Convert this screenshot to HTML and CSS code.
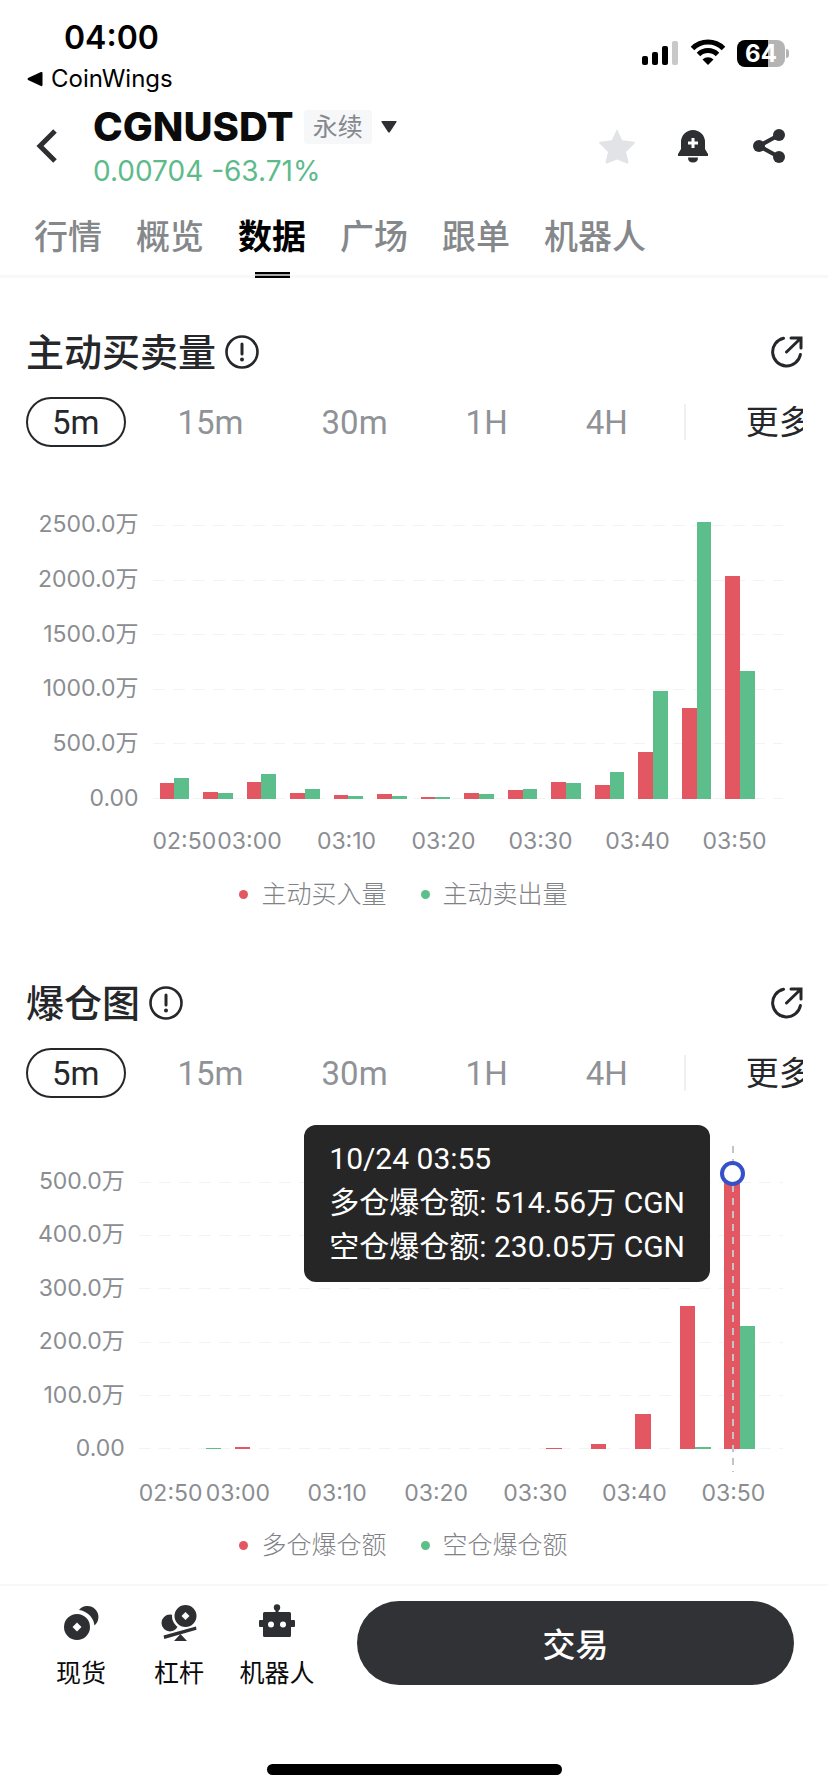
FILE: index.html
```html
<!DOCTYPE html>
<html lang="zh-CN">
<head>
  <meta charset="UTF-8">
  <meta name="viewport" content="width=device-width, initial-scale=1.0">
  <title>CGNUSDT 永续 - 数据</title>
  <link rel="stylesheet" href="styles.css">
</head>
<body>
  <div class="status-bar">
    <div class="status-left">
      <div class="time">04:00</div>
      <a class="back-app" href="#">
        <svg width="16" height="16" viewBox="0 0 16 16"><path d="M1 7 14 1q1.500-.5 1.500 1v12q0 1.500-1.500 1L1 9Q0 8 1 7z"/></svg>
        CoinWings
      </a>
    </div>
    <div class="status-right">
      <svg width="38" height="28" viewBox="0 0 38 28">
        <rect x="1" y="17" width="6" height="9" rx="2"/>
        <rect x="11" y="13" width="6" height="13" rx="2"/>
        <rect x="21" y="7" width="6" height="19" rx="2"/>
        <rect x="31" y="2" width="6" height="24" rx="2" fill="#c8c8c8"/>
      </svg>
      <svg width="36" height="28" viewBox="0 0 36 28">
        <path d="M2.500 9.500a22 22 0 0 1 31 0M8.500 15.500a13.500 13.500 0 0 1 19 0" fill="none" stroke="#000" stroke-width="5"/>
        <path d="M18 26l-5.500-5.500a7.800 7.800 0 0 1 11 0z"/>
      </svg>
      <div class="battery"><span>64</span></div>
    </div>
  </div>

  <header class="header">
    <button class="icon-btn" aria-label="返回">
      <svg width="22" height="34" viewBox="0 0 22 34"><path d="M19 2 4 17l15 15" fill="none" stroke="#2d2f32" stroke-width="5"/></svg>
    </button>
    <div class="symbol">
      <div class="symbol-row">
        <h1>CGNUSDT</h1>
        <span class="badge">永续</span>
        <button class="icon-btn" aria-label="切换交易对">
          <svg width="16" height="12" viewBox="0 0 16 12"><path d="M1 0h14q1 0 .5 1L9 11q-1 1-2 0L.5 1Q0 0 1 0z" fill="#2d2f32"/></svg>
        </button>
      </div>
      <div class="price">0.00704 -63.71%</div>
    </div>
    <div class="actions">
      <button class="icon-btn" aria-label="收藏">
        <svg width="36" height="36" viewBox="0 0 36 36"><path d="M18 1l5.200 11.200 11.800 1.600q1.500.7.300 2L27 24l2.500 10q0 2-2 1.200L18 31.500l-9.500 3.700q-2 .8-2-1.200L9 24 .7 15.800q-1.200-1.300.3-2l11.800-1.600z" fill="#e1e3e6"/></svg>
      </button>
      <button class="icon-btn" aria-label="提醒">
        <svg width="36" height="36" viewBox="0 0 36 36" fill="#2d2f32">
          <path d="M6 14a12 12 0 0 1 24 0v7l3 5v2H3v-2l3-5zM13 29.500h10q0 5-5 5t-5-5z"/>
          <path d="M18 10v10M13 15h10" stroke="#fff" stroke-width="3"/>
        </svg>
      </button>
      <button class="icon-btn" aria-label="分享">
        <svg width="36" height="36" viewBox="0 0 36 36" fill="#2d2f32">
          <path d="M28 7 8 18l20 11" fill="none" stroke="#2d2f32" stroke-width="4"/>
          <circle cx="28" cy="7" r="6"/><circle cx="8" cy="18" r="6"/><circle cx="28" cy="29" r="6"/>
        </svg>
      </button>
    </div>
  </header>

  <nav class="tabs">
    <a href="#">行情</a>
    <a href="#">概览</a>
    <a href="#" class="active">数据</a>
    <a href="#">广场</a>
    <a href="#">跟单</a>
    <a href="#">机器人</a>
  </nav>

  <main>
    <section class="card">
      <div class="card-head">
        <h2>主动买卖量</h2>
        <button class="icon-btn" aria-label="说明">
          <svg width="34" height="34" viewBox="0 0 34 34"><circle cx="17" cy="17" r="15.500" fill="none" stroke="#25272a" stroke-width="2.600"/><path d="M17 9v10" stroke="#25272a" stroke-width="3" stroke-linecap="round"/><circle cx="17" cy="24.500" r="2" fill="#25272a"/></svg>
        </button>
        <button class="icon-btn open" aria-label="展开">
          <svg width="32" height="32" viewBox="0 0 32 32" fill="none" stroke="#25272a" stroke-width="3" stroke-linecap="round"><path d="M12.500 2.300A14 14 0 1 0 29.400 18.500M15.500 16 29.500 2.500M20 2h10v10"/></svg>
        </button>
      </div>
      <div class="periods">
        <button class="active">5m</button>
        <button>15m</button>
        <button>30m</button>
        <button>1H</button>
        <button>4H</button>
        <span class="divider"></span>
        <button class="more">更多</button>
      </div>

      <div class="chart chart-volume">
        <div class="y-axis"><span>2500.0万</span><span>2000.0万</span><span>1500.0万</span><span>1000.0万</span><span>500.0万</span><span>0.00</span></div>
        <div class="plot">
          <div class="grid-lines"><i></i><i></i><i></i><i></i><i></i><i></i></div>
          <div class="bars">
            <div><b style="--v:143"></b><b style="--v:195"></b></div>
            <div><b style="--v:64"></b><b style="--v:58"></b></div>
            <div><b style="--v:155"></b><b style="--v:231"></b></div>
            <div><b style="--v:58"></b><b style="--v:91"></b></div>
            <div><b style="--v:33"></b><b style="--v:27"></b></div>
            <div><b style="--v:49"></b><b style="--v:24"></b></div>
            <div><b style="--v:21"></b><b style="--v:21"></b></div>
            <div><b style="--v:55"></b><b style="--v:49"></b></div>
            <div><b style="--v:85"></b><b style="--v:91"></b></div>
            <div><b style="--v:152"></b><b style="--v:143"></b></div>
            <div><b style="--v:125"></b><b style="--v:243"></b></div>
            <div><b style="--v:432"></b><b style="--v:988"></b></div>
            <div><b style="--v:830"></b><b style="--v:2524"></b></div>
            <div><b style="--v:2031"></b><b style="--v:1165"></b></div>
          </div>
        </div>
        <div class="x-axis"><span>02:50</span><span>03:00</span><span>03:10</span><span>03:20</span><span>03:30</span><span>03:40</span><span>03:50</span></div>
      </div>
      <div class="legend"><span class="buy">主动买入量</span><span class="sell">主动卖出量</span></div>
    </section>

    <section class="card">
      <div class="card-head">
        <h2>爆仓图</h2>
        <button class="icon-btn" aria-label="说明">
          <svg width="34" height="34" viewBox="0 0 34 34"><circle cx="17" cy="17" r="15.500" fill="none" stroke="#25272a" stroke-width="2.600"/><path d="M17 9v10" stroke="#25272a" stroke-width="3" stroke-linecap="round"/><circle cx="17" cy="24.500" r="2" fill="#25272a"/></svg>
        </button>
        <button class="icon-btn open" aria-label="展开">
          <svg width="32" height="32" viewBox="0 0 32 32" fill="none" stroke="#25272a" stroke-width="3" stroke-linecap="round"><path d="M12.500 2.300A14 14 0 1 0 29.400 18.500M15.500 16 29.500 2.500M20 2h10v10"/></svg>
        </button>
      </div>
      <div class="periods">
        <button class="active">5m</button>
        <button>15m</button>
        <button>30m</button>
        <button>1H</button>
        <button>4H</button>
        <span class="divider"></span>
        <button class="more">更多</button>
      </div>

      <div class="chart chart-liquidation">
        <div class="y-axis"><span>500.0万</span><span>400.0万</span><span>300.0万</span><span>200.0万</span><span>100.0万</span><span>0.00</span></div>
        <div class="plot">
          <div class="grid-lines"><i></i><i></i><i></i><i></i><i></i><i></i></div>
          <div class="bars">
            <div><b style="--v:0"></b><b style="--v:0"></b></div>
            <div><b style="--v:0"></b><b style="--v:1"></b></div>
            <div><b style="--v:4"></b><b style="--v:0"></b></div>
            <div><b style="--v:0"></b><b style="--v:0"></b></div>
            <div><b style="--v:0"></b><b style="--v:0"></b></div>
            <div><b style="--v:0"></b><b style="--v:0"></b></div>
            <div><b style="--v:0"></b><b style="--v:0"></b></div>
            <div><b style="--v:0"></b><b style="--v:0"></b></div>
            <div><b style="--v:0"></b><b style="--v:0"></b></div>
            <div><b style="--v:1"></b><b style="--v:0"></b></div>
            <div><b style="--v:9"></b><b style="--v:0"></b></div>
            <div><b style="--v:65"></b><b style="--v:0"></b></div>
            <div><b style="--v:267"></b><b style="--v:4"></b></div>
            <div><b class="selected" style="--v:514.56"></b><b style="--v:230.05"></b></div>
          </div>
          <div class="tooltip">
            <div>10/24 03:55</div>
            <div>多仓爆仓额: 514.56万 CGN</div>
            <div>空仓爆仓额: 230.05万 CGN</div>
          </div>
        </div>
        <div class="x-axis"><span>02:50</span><span>03:00</span><span>03:10</span><span>03:20</span><span>03:30</span><span>03:40</span><span>03:50</span></div>
      </div>
      <div class="legend"><span class="buy">多仓爆仓额</span><span class="sell">空仓爆仓额</span></div>
    </section>
  </main>

  <footer class="bottom-bar">
    <div class="bottom-row">
      <a class="entry" href="#">
        <svg width="36" height="38" viewBox="0 0 36 38" fill="#2d2f32">
          <path d="M16 6a11 11 0 1 1 15.500 15.500A18 18 0 0 0 16 6z"/>
          <circle cx="14" cy="23" r="15" fill="#fff"/>
          <path fill-rule="evenodd" d="M14 10a13 13 0 1 0 0 26 13 13 0 0 0 0-26zm0 8.500 4.500 4.500-4.500 4.500L9.500 23z"/>
        </svg>
        <span>现货</span>
      </a>
      <a class="entry" href="#">
        <svg width="36" height="38" viewBox="0 0 36 38" fill="#2d2f32">
          <circle cx="9" cy="19" r="8.500"/>
          <circle cx="24.500" cy="12" r="13.500" fill="#fff"/>
          <path fill-rule="evenodd" d="M24.500 1a11 11 0 1 0 0 22 11 11 0 0 0 0-22zm0 7 4 4-4 4-4-4z"/>
          <path d="M2.500 31.500 35 22.500l.5 3.200L3.300 35zM19.500 30l6.500 7H13z"/>
        </svg>
        <span>杠杆</span>
      </a>
      <a class="entry" href="#">
        <svg width="36" height="38" viewBox="0 0 36 38" fill="#2d2f32">
          <path d="M18 3v6" stroke="#2d2f32" stroke-width="3"/><circle cx="18" cy="3.500" r="3.200"/>
          <path fill-rule="evenodd" d="M5.500 8h25q1.500 0 1.500 1.500V16h3q1 0 1 1v5q0 1-1 1h-3v8.500q0 1.500-1.500 1.500h-25Q4 33 4 31.500V23H1q-1 0-1-1v-5q0-1 1-1h3V9.500Q4 8 5.500 8zM12 17.500a3 3 0 1 0 0 6 3 3 0 0 0 0-6zm12 0a3 3 0 1 0 0 6 3 3 0 0 0 0-6z"/>
        </svg>
        <span>机器人</span>
      </a>
      <button class="trade-btn">交易</button>
    </div>
    <div class="home-indicator"></div>
  </footer>
</body>
</html>
```
FILE: styles.css
```css
*,
*::before,
*::after {
  box-sizing: border-box;
}

body {
  margin: 0;
  min-height: 100vh;
  display: flex;
  flex-direction: column;
  background: #fff;
  color: #25272a;
  font-family: Inter, "Noto Sans CJK SC", sans-serif;
}

button {
  border: none;
  background: none;
  padding: 0;
  margin: 0;
  font: inherit;
  color: inherit;
  cursor: pointer;
}

a {
  color: inherit;
  text-decoration: none;
}

svg {
  display: block;
}

.icon-btn {
  flex: none;
}

/* status bar */
.status-bar {
  display: flex;
  justify-content: space-between;
  padding: 18px 39px 0 27px;
  color: #000;
}

.time {
  padding-left: 37px;
  font-size: 32px;
  line-height: 40px;
  font-weight: 600;
}

.back-app {
  display: flex;
  align-items: center;
  gap: 8px;
  margin-top: 7px;
  font-size: 24px;
  line-height: 28px;
}

.status-right {
  display: flex;
  align-items: center;
  gap: 11px;
  height: 28px;
  margin-top: 21px;
}

.battery {
  position: relative;
  width: 48px;
  height: 27px;
  margin-right: 4px;
  border-radius: 8px;
  background: linear-gradient(90deg, #000 64%, #b4b4b4 64%);
  color: #fff;
  font-size: 24px;
  line-height: 27px;
  font-weight: 700;
  text-align: center;
}

.battery::after {
  content: "";
  position: absolute;
  right: -4px;
  top: 9px;
  width: 3px;
  height: 9px;
  border-radius: 0 4px 4px 0;
  background: #b4b4b4;
}

/* header */
.header {
  display: flex;
  align-items: center;
  padding: 10px 41px 0 36px;
}

.symbol {
  flex: 1;
  margin-left: 35px;
}

.symbol-row {
  display: flex;
  align-items: center;
  height: 48px;
}

h1 {
  margin: 0 10px 0 0;
  font-size: 40px;
  line-height: 48px;
  font-weight: 800;
  color: #0b0b0c;
}

.badge {
  padding: 0 9px;
  margin-right: 9px;
  background: #f6f7f9;
  border-radius: 3px;
  color: #85888c;
  font-size: 25px;
  line-height: 34px;
}

.price {
  margin-top: 2px;
  color: #5dbb8b;
  font-size: 28px;
  line-height: 36px;
}

.actions {
  display: flex;
  gap: 40px;
}

/* tabs */
.tabs {
  display: flex;
  gap: 34px;
  padding: 28px 34px 0;
  border-bottom: 3px solid #f8f8f9;
  color: #85888b;
  font-size: 34px;
  line-height: 40px;
  font-weight: 500;
}

.tabs a {
  position: relative;
  padding-bottom: 18px;
  white-space: nowrap;
}

.tabs .active {
  color: #000;
  font-weight: 700;
}

.tabs .active::after {
  content: "";
  position: absolute;
  left: 50%;
  bottom: -3px;
  width: 35px;
  height: 6px;
  margin-left: -17px;
  border: solid #000;
  border-width: 2px 0;
  background: #aaa;
}

main {
  flex: 1;
}

/* chart cards */
.card {
  padding: 51px 25px 0 26px;
}

.card + .card {
  padding: 71px 25px 24px 26px;
}

.card-head {
  display: flex;
  align-items: center;
  gap: 9px;
}

h2 {
  margin: 0;
  font-size: 38px;
  line-height: 46px;
  font-weight: 500;
}

.open {
  margin-left: auto;
}

.periods {
  display: flex;
  align-items: center;
  gap: 26px;
  margin-top: 22px;
  overflow: hidden;
  color: #8f9296;
  font-family: Roboto, "Noto Sans CJK SC", sans-serif;
  font-size: 33px;
}

.periods button {
  flex: none;
  height: 50px;
  padding: 0 24px;
  border: 2px solid transparent;
  border-radius: 25px;
  line-height: 48px;
}

.periods .active {
  border-color: #25272a;
  color: #25272a;
}

.periods .more {
  color: #25272a;
}

.divider {
  flex: none;
  width: 2px;
  height: 36px;
  margin: 0 8px 0 4px;
  background: #f0f0f1;
}

.chart {
  display: grid;
  grid-template-columns: auto 1fr;
  column-gap: 14px;
  padding: 0 20px 0 12px;
  color: #8a8d91;
  font-size: 23px;
  line-height: 30px;
}

.chart-volume {
  --max: 2500;
  grid-template-rows: 274px 30px;
  row-gap: 27px;
  margin-top: 78px;
  margin-bottom: 23px;
}

.chart-liquidation {
  --max: 500;
  grid-template-rows: 267px 30px;
  row-gap: 29px;
  margin-top: 84px;
  margin-bottom: 22px;
}

.y-axis {
  display: flex;
  flex-direction: column;
  justify-content: space-between;
  margin: -16px 0 -14px;
  text-align: right;
}

.plot {
  position: relative;
  display: grid;
}

.grid-lines,
.bars {
  grid-area: 1 / 1;
}

.grid-lines {
  display: flex;
  flex-direction: column;
  justify-content: space-between;
}

.grid-lines i {
  height: 1px;
  background: repeating-linear-gradient(90deg, #f3f3f4 0 12px, transparent 12px 20px);
}

.bars {
  position: relative;
  display: grid;
  grid-template-columns: repeat(14, 1fr);
  padding-right: 21px;
}

.bars div {
  display: flex;
  align-items: flex-end;
  padding: 0 7px;
}

.bars b {
  flex: 1;
  height: calc(var(--v) / var(--max) * 100%);
  background: #e25762;
}

.bars b + b {
  background: #5cbf8b;
}

/* axis pointer and marker on the selected bar */
.bars .selected {
  position: relative;
}

.selected::before {
  content: "";
  position: absolute;
  left: 50%;
  top: -28px;
  bottom: -23px;
  width: 2px;
  background: repeating-linear-gradient(#c4c4c6 0 7px, transparent 7px 13px);
}

.selected::after {
  content: "";
  position: absolute;
  left: 50%;
  top: -13px;
  width: 25px;
  height: 25px;
  margin-left: -12px;
  border: 4px solid #3550cb;
  border-radius: 50%;
  background: #fff;
}

.tooltip {
  position: absolute;
  right: 73px;
  top: -57px;
  padding: 12px 25px 13px;
  border-radius: 12px;
  background: #262626;
  color: #fff;
  font-family: Roboto, "Noto Sans CJK SC", sans-serif;
  font-size: 30px;
  line-height: 44px;
  white-space: nowrap;
}

.x-axis {
  grid-column: 2;
  display: grid;
  grid-template-columns: minmax(0, 1fr) repeat(6, minmax(0, 2fr));
  text-align: center;
  white-space: nowrap;
}

.x-axis span:first-child {
  text-align: left;
}

.legend {
  display: flex;
  justify-content: center;
  gap: 34px;
  padding-right: 22px;
  color: #7f8286;
  font-size: 25px;
  line-height: 30px;
  font-weight: 300;
}

.legend span {
  display: flex;
  align-items: center;
  gap: 13px;
}

.legend span::before {
  content: "";
  width: 9px;
  height: 9px;
  border-radius: 50%;
  background: #e25762;
}

.legend .sell::before {
  background: #5cbf8b;
}

/* bottom bar */
.bottom-bar {
  border-top: 2px solid #f8f8f9;
  padding-bottom: 17px;
}

.bottom-row {
  display: flex;
  padding: 15px 34px 0 32px;
}

.entry {
  display: flex;
  flex-direction: column;
  align-items: center;
  width: 98px;
  padding-top: 3px;
  color: #0b0b0c;
  font-size: 25px;
  line-height: 34px;
}

.entry span {
  margin-top: 14px;
}

.trade-btn {
  flex: 1;
  height: 84px;
  margin-left: 31px;
  border-radius: 42px;
  background: #313235;
  color: #fff;
  font-size: 33px;
  font-weight: 500;
}

.home-indicator {
  width: 295px;
  height: 11px;
  margin: 74px auto 0;
  border-radius: 6px;
  background: #000;
}
```
